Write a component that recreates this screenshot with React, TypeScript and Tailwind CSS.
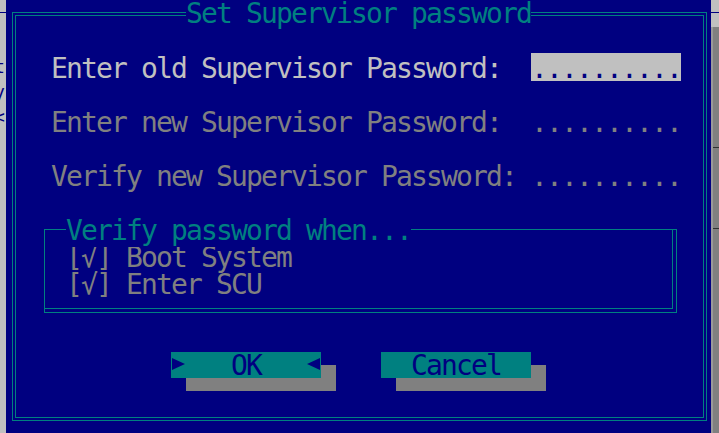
import type { ReactNode } from 'react'

const NAVY = '#000080'

// One text cell is 15px wide, one row 27px tall.
const cellText = 'text-[28px] leading-[27px] tracking-[-1.86px] whitespace-pre'

function Dots({ active }: { active?: boolean }) {
  return (
    <div
      className={
        active
          ? `-mt-[2px] h-[28px] w-[150px] bg-[#c0c0c0] pt-[2px] text-[#000080] ${cellText}`
          : `w-[150px] text-[#808080] ${cellText}`
      }
    >
      ..........
    </div>
  )
}

function PasswordRow({ label, active, className = '' }: { label: string; active?: boolean; className?: string }) {
  return (
    <div className={`flex h-[27px] ${className}`}>
      <div className={`w-[480px] ${cellText} ${active ? 'text-[#c0c0c0]' : 'text-[#808080]'}`}>{label}</div>
      <Dots active={active} />
    </div>
  )
}

function Arrow({ dir }: { dir: 'left' | 'right' }) {
  return (
    <svg width="13" height="12" viewBox="0 0 13 12" className="block">
      {dir === 'right' ? (
        <polygon points="0,0 13,6 0,12" fill={NAVY} />
      ) : (
        <polygon points="13,0 0,6 13,12" fill={NAVY} />
      )}
    </svg>
  )
}

function DosButton({ children, focused }: { children: ReactNode; focused?: boolean }) {
  return (
    <div className="relative flex h-[26px] w-[150px] justify-center bg-[#008080] text-[#000080] shadow-[15px_13px_0_#808080]">
      {focused ? (
        <span className="absolute left-[1px] top-[6px]">
          <Arrow dir="right" />
        </span>
      ) : null}
      <span className={cellText}>{children}</span>
      {focused ? (
        <span className="absolute right-[1px] top-[6px]">
          <Arrow dir="left" />
        </span>
      ) : null}
    </div>
  )
}

export default function App() {
  return (
    <div className="flex h-[433px] w-[719px] overflow-hidden bg-[#000080] font-['DejaVu_Sans_Mono',monospace]">
      {/* left edge of the window behind */}
      <div className="relative w-[6px] shrink-0 overflow-hidden bg-[#c0c0c0]">
        <div className="mt-[12px] h-[1px] bg-[#000080]" />
        <div className="-ml-[6px] pt-[41px] text-[18px] leading-[25px] text-[#000080]">
          <div>t</div>
          <div>y</div>
          <div>&lt;</div>
        </div>
      </div>

      {/* dialog area */}
      <div className="w-[705px] shrink-0 pl-[6px] pt-[12px]">
        <div className="relative h-[409px] w-[695px] border border-[#008080] p-[2px]">
          <div className="absolute -top-[13px] left-[173px] bg-[#000080] text-[#008080]">
            <span className={cellText}>Set Supervisor password</span>
          </div>

          <div className="h-full border border-[#008080] pl-[35px] pt-[39px]">
            <PasswordRow label="Enter old Supervisor Password:" active />
            <PasswordRow label="Enter new Supervisor Password:" className="mt-[27px]" />
            <PasswordRow label="Verify new Supervisor Password:" className="mt-[27px]" />

            <div className="relative -ml-[7px] mt-[39px] h-[84px] w-[633px] border border-[#008080] pb-[3px] pr-[3px]">
              <div className="absolute -top-[13px] left-[21px] bg-[#000080] text-[#008080]">
                <span className={cellText}>Verify password when...</span>
              </div>
              <div className="h-full border-b border-r border-[#008080] pl-[21px] pt-[14px] text-[#808080]">
                <div className={cellText}>[√] Boot System</div>
                <div className={cellText}>[√] Enter SCU</div>
              </div>
            </div>

            <div className="ml-[120px] mt-[39px] flex gap-[60px]">
              <DosButton focused>OK</DosButton>
              <DosButton>Cancel</DosButton>
            </div>
          </div>
        </div>
      </div>

      {/* right edge: scrollbar of the window behind */}
      <div className="flex w-[8px] shrink-0 flex-col">
        <div className="h-[12px] bg-[#c0c0c0]" />
        <div className="h-[1px] bg-[#000080]" />
        <div className="h-[14px] bg-[#c0c0c0]" />
        <div className="flex-1 border-l-[2px] border-[#9a9a9a] bg-[#808080]">
          <div className="mt-[120px] h-[1px] bg-[#303030]" />
          <div className="mt-[80px] h-[1px] bg-[#303030]" />
        </div>
      </div>
    </div>
  )
}
